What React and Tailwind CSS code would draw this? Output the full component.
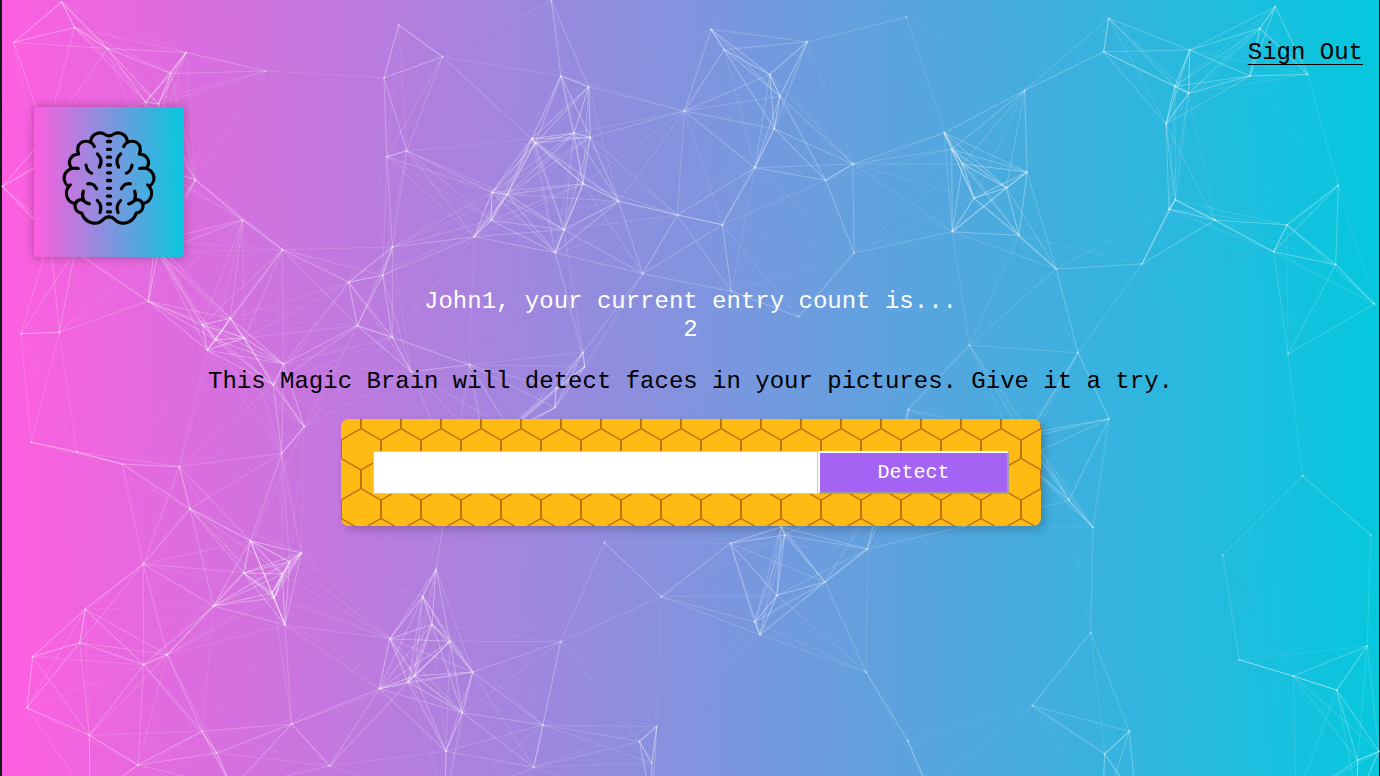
const NODES = [
  [61.7, 2], [74.5, 27.5], [13.7, 42.3], [107.4, 48.5], [186, 52.5], [171, 73.5], [265.7, 71], [145.5, 102], [158.5, 104],
  [2.3, 186.5], [195.3, 179.7], [242.7, 220], [282.5, 249.7], [398.7, 25], [442.5, 56.8], [384, 77.8], [386.8, 156.8],
  [406.7, 150.8], [392.4, 247], [46, 136], [39, 165], [75, 251], [50, 236], [155, 241], [158, 252], [150, 165],
  [551.3, 0.7], [561, 76], [588.7, 86.7], [531.7, 138.7], [535.3, 143.3], [574, 133], [590.3, 137.3], [583, 183.7],
  [492, 192.3], [507.3, 194.7], [491, 220.3], [474.3, 236.7], [564, 229.7], [555.3, 252.7], [618.7, 201.3], [677.3, 215],
  [722.3, 224.7], [684.3, 111], [711, 29.3], [724.3, 49.7], [807.3, 41.7], [769.7, 74.7], [780, 96.3], [774.3, 128.7],
  [755, 167.7], [825.7, 180.3], [853, 164], [854, 253], [906.3, 17],
  [1108.7, 18.3], [1103.7, 51.7], [1024.7, 90.3], [944.3, 132.7], [951.7, 149.3], [962.7, 164], [1027, 172], [1006.3, 187.7],
  [974, 198.3], [952.3, 231.7], [1019, 235.3], [1189.7, 50], [1175, 86.3], [1188.7, 93.3], [1166, 124], [1275.3, 6.7],
  [1260, 28.3], [1250, 76], [1307.7, 74.3], [1338.3, 185.3], [1175.3, 199.7], [1169, 209.3], [1215, 220], [1287, 225],
  [1273.7, 251.7], [21, 333.7], [59.3, 332.3], [148.3, 301.3], [202.3, 324.7], [230.3, 318.3], [215.7, 339.7],
  [244.3, 338], [207.3, 350], [283.7, 364], [273.3, 385], [304.3, 426.7], [281.7, 453.3], [31.3, 442.3], [76.7, 451.7],
  [122, 464], [179.3, 466.7], [190, 508.7], [348.7, 282.3], [382.7, 275.3], [357.3, 325.7], [392.3, 337.3], [411.3, 371.7],
  [469.3, 364.7], [583, 352.3], [584.7, 366.7], [556.3, 388.3], [554.7, 407.7], [642.7, 273.7], [731.3, 291.3],
  [798.3, 316.7], [908.3, 409.7], [1056.3, 269], [1142, 264], [969.3, 345.3], [1078, 352.7], [1109, 418.7], [1069, 500.3],
  [1302.7, 476], [1288, 354], [1374.3, 304], [1335.7, 264.7], [1030, 433], [1025, 438], [1022, 459], [964.3, 526.3],
  [781.3, 526.7], [784.7, 535], [730.3, 543.3], [485, 447], [510, 430], [452, 470], [900, 470], [882, 490],
  [143.3, 564], [85.3, 609.3], [79.7, 642.7], [32.7, 656.7], [143.7, 664.7], [167.3, 654.7], [27, 707.7], [89.3, 735.3],
  [138, 765], [202, 731.3], [216.7, 753], [291.7, 724], [329.7, 766], [213.7, 606], [250.3, 540.7], [243.7, 573],
  [289.7, 561.7], [301.3, 553], [282.3, 574], [272, 593], [274, 598], [285, 625], [436, 569.3], [422.7, 596.3],
  [390, 638.7], [432, 624.3], [450, 641.3], [414.7, 675.7], [408, 682], [379.3, 688.7], [446, 751.3], [472.7, 672],
  [462.3, 712.7], [560.7, 641.7], [543, 725], [533.7, 767.3], [604.3, 542.7], [661.3, 596.7], [777, 595.3],
  [754.7, 622], [760, 634.7], [825, 582], [867.3, 549], [866.3, 672.3], [656.7, 726.7], [639.3, 741.3], [651.7, 763],
  [907.7, 740.7], [1093, 527.3], [1090.7, 632.7], [1032.3, 705.7], [1129.3, 731.3], [1104.7, 754], [1222.7, 555],
  [1239.3, 659.7], [1370.7, 535], [1367.3, 646], [1293.3, 676], [1336.7, 690], [1379, 751.3], [1357.7, 760.3],
  [232, 788], [90, 800], [445, 805], [652, 805], [1102, 815], [1136, 800], [928, 788], [1296, 800], [1357, 800],
];

const REACH = 150;

const LINKS = NODES.flatMap(([x1, y1], i) =>
  NODES.slice(i + 1).flatMap(([x2, y2]) => {
    const d = Math.hypot(x2 - x1, y2 - y1);
    return d < REACH ? [{ x1, y1, x2, y2, o: 0.54 * (1 - d / REACH) }] : [];
  })
);

function Particles() {
  return (
    <svg className="absolute inset-0 -z-10 h-full w-full" viewBox="0 0 1380 776" stroke="#fff" fill="#fff">
      {LINKS.map((l, i) => (
        <line key={i} x1={l.x1} y1={l.y1} x2={l.x2} y2={l.y2} strokeWidth="1.1" strokeOpacity={l.o} />
      ))}
      {NODES.map(([x, y], i) => (
        <circle key={i} cx={x} cy={y} r="1.1" stroke="none" fillOpacity="0.4" />
      ))}
    </svg>
  );
}

const HALF_BRAIN = [
  "M255 118Q247 118 240 112A28 28 0 0 0 200 138",
  "M211 150C200 128 170 130 162 151Q159 162 164 173C140 174 129 196 142 214",
  "M163 216C125 208 105 247 134 271",
  "M139 265C119 282 125 315 152 321",
  "M196 322Q185 320 178 311C165 306 152 315 153 331Q156 348 173 350C186 385 222 388 241 366Q247 361 255 361",
  "M178 284Q173 299 179 312",
  "M220 172Q239 190 226 212",
  "M186 206Q188 224 203 230",
  "M191 262Q209 259 218 277",
  "M220 312Q236 328 228 348",
];

function BrainIcon() {
  return (
    <svg className="h-full w-full" viewBox="30 31.500 450 450" fill="none" stroke="#000" strokeWidth="9.500" strokeLinecap="round" strokeLinejoin="round">
      {HALF_BRAIN.map((d) => <path key={d} d={d} />)}
      <g transform="translate(510 0) scale(-1 1)">
        {HALF_BRAIN.map((d) => <path key={d} d={d} />)}
      </g>
      <path strokeWidth="10" d="M250.500 135h9M250.500 158.500h9M250.500 182h9M250.500 205.500h9M250.500 229h9M250.500 252h9M250.500 275.500h9M250.500 299h9M250.500 322.500h9M250.500 346h9" />
    </svg>
  );
}

function Honeycomb() {
  return (
    <svg className="absolute inset-0 -z-10 h-full w-full rounded-lg">
      <defs>
        <pattern id="comb" width="40" height="60" patternUnits="userSpaceOnUse">
          <rect width="40" height="60" fill="#ffba14" />
          <g stroke="#bb7510" fill="none">
            <path strokeWidth="2" shapeRendering="crispEdges" d="M20 0V9M20 51V60M0 21V40M40 21V40" />
            <path strokeWidth="1.500" d="M0 21L20 9.500L40 21M0 39.500L20 51L40 39.500" />
          </g>
        </pattern>
      </defs>
      <rect width="100%" height="100%" fill="url(#comb)" />
    </svg>
  );
}

export default function App() {
  return (
    <div className="h-[776px] overflow-hidden bg-[#14181c] pr-px pl-0.5 font-['Liberation_Mono',monospace] text-2xl leading-[27.6px]">
      <div className="h-full bg-[linear-gradient(89deg,#ff5edf_0%,#04c8de_100%)]">
        <div className="relative isolate -mr-px -ml-0.5 flex h-full flex-col pr-px pl-0.5">
          <Particles />
          <nav className="flex justify-end pt-[39px] pr-4">
            <a className="cursor-pointer text-black underline decoration-1 underline-offset-[5px]">Sign Out</a>
          </nav>
          <div className="mt-[40.4px] ml-8 h-[150px] w-[150px] rounded-sm bg-[linear-gradient(89deg,#ff5edf_0%,#04c8de_100%)] shadow-[0_0_8px_2px_rgba(0,0,0,0.2)]">
            <BrainIcon />
          </div>
          <div className="mt-[31px] text-center text-white">
            <div>John1, your current entry count is...</div>
            <div>2</div>
          </div>
          <p className="mt-[24.8px] text-center text-black">
            This Magic Brain will detect faces in your pictures. Give it a try.
          </p>
          <div className="relative isolate mt-[23.4px] ml-[339px] flex h-[107px] w-[700px] rounded-lg p-8 shadow-[4px_4px_8px_0_rgba(0,0,0,0.2)]">
            <Honeycomb />
            <input type="text" className="h-[43px] w-[70%] border border-[#ccc] bg-white px-2 outline-none" />
            <button className="h-[43px] w-[30%] border-2 border-t-white border-r-[#a09da3] border-b-[#a09da3] border-l-white bg-[#a463f2] pt-0.5 text-xl text-white">
              Detect
            </button>
          </div>
        </div>
      </div>
    </div>
  );
}
